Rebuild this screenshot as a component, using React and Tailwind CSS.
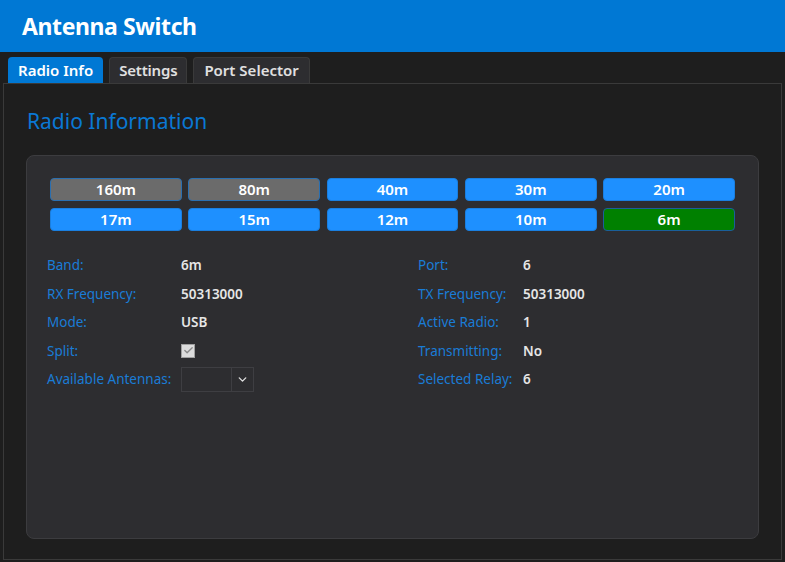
import { ChevronDown, Check } from "lucide-react";

const bands = [
  { name: "160m", state: "off" },
  { name: "80m", state: "off" },
  { name: "40m", state: "on" },
  { name: "30m", state: "on" },
  { name: "20m", state: "on" },
  { name: "17m", state: "on" },
  { name: "15m", state: "on" },
  { name: "12m", state: "on" },
  { name: "10m", state: "on" },
  { name: "6m", state: "active" },
];

const bandStyle = {
  off: "bg-[#6b6b6b] border-[#2a6fb0]",
  on: "bg-[#1e90ff] border-[#1a7fe0]",
  active: "bg-[#008000] border-[#1a5f9a]",
};

function Row({ label, width, children }) {
  return (
    <div className="flex items-center h-[28.5px]">
      <span className={`text-[#1a7cd6] shrink-0 ${width}`}>{label}</span>
      <span className="text-[#e6e6e6] font-semibold">{children}</span>
    </div>
  );
}

export default function App() {
  return (
    <div
      className="w-[785px] h-[562px] bg-[#1e1e1e] flex flex-col overflow-hidden"
      style={{ fontFamily: '"Noto Sans", "Open Sans", sans-serif' }}
    >
      {/* Header */}
      <div className="h-[52px] bg-[#0078d4] flex items-center pl-[22px] shrink-0">
        <h1 className="text-white text-[23px] font-bold tracking-[-0.4px]">Antenna Switch</h1>
      </div>

      {/* Tabs */}
      <div className="flex items-end gap-[6px] pl-[8px] h-[31px] shrink-0">
        <div className="h-[26px] px-[10px] flex items-center bg-[#0078d4] rounded-t-[4px] text-white text-[15px] font-semibold">
          Radio Info
        </div>
        <div className="h-[26px] px-[9px] flex items-center bg-[#2d2d30] border border-b-0 border-[#3a3a3a] rounded-t-[4px] text-[#e0e0e0] text-[15px] font-semibold tracking-[-0.2px]">
          Settings
        </div>
        <div className="h-[26px] px-[10px] flex items-center bg-[#2d2d30] border border-b-0 border-[#3a3a3a] rounded-t-[4px] text-[#e0e0e0] text-[15px] font-semibold">
          Port Selector
        </div>
      </div>

      {/* Content */}
      <div className="flex-1 mx-[3px] mb-[2px] border border-[#3a3a3a] bg-[#1e1e1e] px-[22px] pt-[22px] pb-[20px] flex flex-col">
        <h2 className="text-[#0a78d4] text-[21px] leading-[30px] mb-[19px] pl-[1px]">Radio Information</h2>

        <div className="flex-1 bg-[#2d2d30] border border-[#3c3c3f] rounded-[8px] px-[23px] pt-[22px]">
          <div className="grid grid-cols-5 gap-x-[6.5px] gap-y-[7px]">
            {bands.map((b) => (
              <div
                key={b.name}
                className={`h-[23px] rounded-[4px] border flex items-center justify-center text-white text-[15px] font-semibold ${bandStyle[b.state]}`}
              >
                {b.name}
              </div>
            ))}
          </div>

          <div className="grid grid-cols-2 mt-[20px] text-[13.5px] ml-[-3px]">
            <div className="flex flex-col">
              <Row label="Band:" width="w-[134px]">6m</Row>
              <Row label="RX Frequency:" width="w-[134px]">50313000</Row>
              <Row label="Mode:" width="w-[134px]">USB</Row>
              <Row label="Split:" width="w-[134px]">
                <span className="w-[14px] h-[14px] bg-[#dcdcdc] border border-[#a0a0a0] flex items-center justify-center">
                  <Check size={11} strokeWidth={3} className="text-[#8a8a8a]" />
                </span>
              </Row>
              <Row label="Available Antennas:" width="w-[134px]">
                <span className="w-[73px] h-[25px] border border-[#3e3e42] flex font-normal">
                  <span className="flex-1 border-r border-[#3e3e42]" />
                  <span className="w-[21px] flex items-center justify-center">
                    <ChevronDown size={13} strokeWidth={2.5} className="text-[#e0e0e0]" />
                  </span>
                </span>
              </Row>
            </div>
            <div className="flex flex-col pl-[27px]">
              <Row label="Port:" width="w-[105px]">6</Row>
              <Row label="TX Frequency:" width="w-[105px]">50313000</Row>
              <Row label="Active Radio:" width="w-[105px]">1</Row>
              <Row label="Transmitting:" width="w-[105px]">No</Row>
              <Row label="Selected Relay:" width="w-[105px]">6</Row>
            </div>
          </div>
        </div>
      </div>
    </div>
  );
}
